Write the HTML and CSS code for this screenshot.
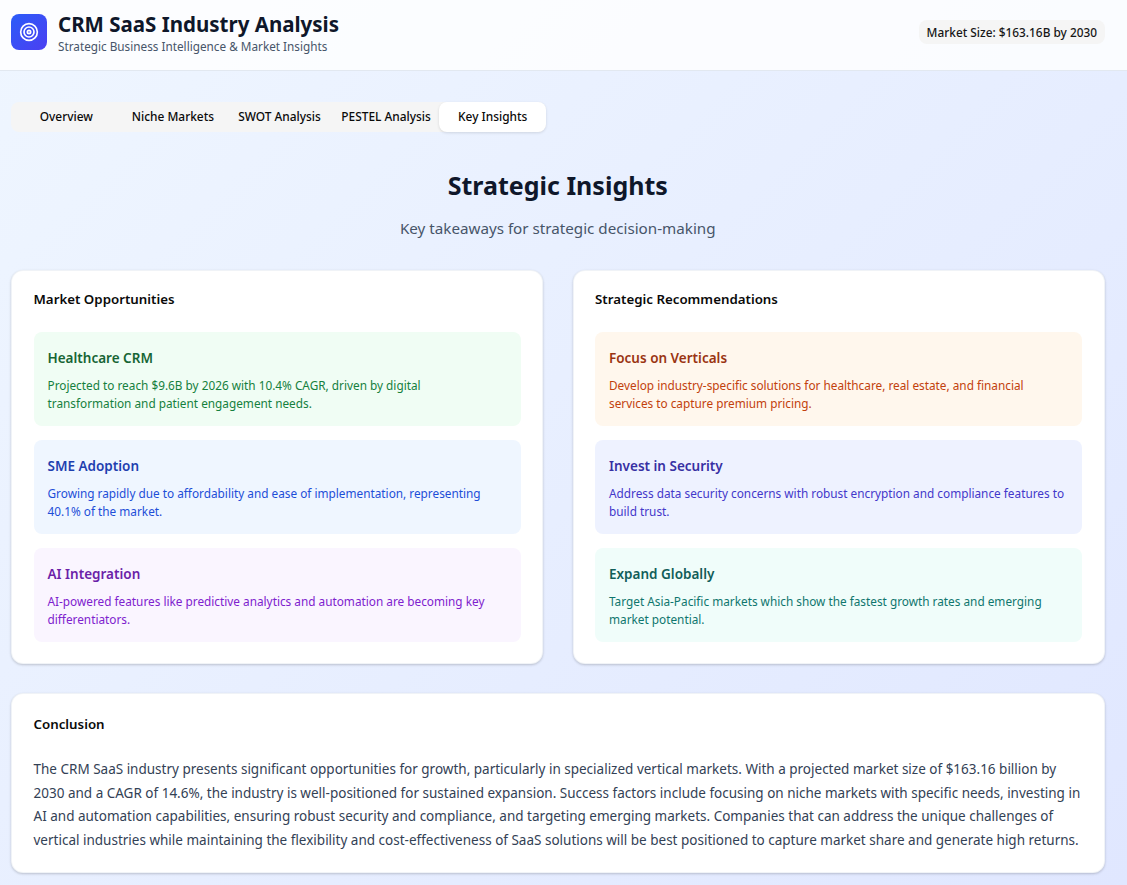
FILE: index.html
```html
<!DOCTYPE html>
<html lang="en">
<head>
<meta charset="utf-8">
<title>CRM SaaS Industry Analysis</title>
<link rel="stylesheet" href="styles.css">
</head>
<body>
<header class="header">
  <div class="brand">
    <div class="logo">
      <svg width="20" height="20" viewBox="0 0 24 24" fill="none" stroke="#fff" stroke-width="2"><circle cx="12" cy="12" r="10"/><circle cx="12" cy="12" r="6"/><circle cx="12" cy="12" r="2"/></svg>
    </div>
    <div>
      <h1 class="title">CRM SaaS Industry Analysis</h1>
      <p class="subtitle">Strategic Business Intelligence &amp; Market Insights</p>
    </div>
  </div>
  <div class="badge">Market Size: $163.16B by 2030</div>
</header>
<main class="main">
  <nav class="tabs">
    <div class="tab">Overview</div>
    <div class="tab">Niche Markets</div>
    <div class="tab">SWOT Analysis</div>
    <div class="tab">PESTEL Analysis</div>
    <div class="tab tab-active">Key Insights</div>
  </nav>
  <section class="intro">
    <h2 class="intro-title">Strategic Insights</h2>
    <p class="intro-text">Key takeaways for strategic decision-making</p>
  </section>
  <section class="columns">
    <div class="card">
      <h3 class="card-title">Market Opportunities</h3>
      <div class="items">
        <div class="item green"><h4>Healthcare CRM</h4><p>Projected to reach $9.6B by 2026 with 10.4% CAGR, driven by digital transformation and patient engagement needs.</p></div>
        <div class="item blue"><h4>SME Adoption</h4><p>Growing rapidly due to affordability and ease of implementation, representing 40.1% of the market.</p></div>
        <div class="item purple"><h4>AI Integration</h4><p>AI-powered features like predictive analytics and automation are becoming key differentiators.</p></div>
      </div>
    </div>
    <div class="card">
      <h3 class="card-title">Strategic Recommendations</h3>
      <div class="items">
        <div class="item orange"><h4>Focus on Verticals</h4><p>Develop industry-specific solutions for healthcare, real estate, and financial services to capture premium pricing.</p></div>
        <div class="item indigo"><h4>Invest in Security</h4><p>Address data security concerns with robust encryption and compliance features to build trust.</p></div>
        <div class="item teal"><h4>Expand Globally</h4><p>Target Asia-Pacific markets which show the fastest growth rates and emerging market potential.</p></div>
      </div>
    </div>
  </section>
  <section class="card conclusion">
    <h3 class="card-title">Conclusion</h3>
    <p class="conclusion-text">The CRM SaaS industry presents significant opportunities for growth, particularly in specialized vertical markets. With a projected market size of $163.16 billion by 2030 and a CAGR of 14.6%, the industry is well-positioned for sustained expansion. Success factors include focusing on niche markets with specific needs, investing in AI and automation capabilities, ensuring robust security and compliance, and targeting emerging markets. Companies that can address the unique challenges of vertical industries while maintaining the flexibility and cost-effectiveness of SaaS solutions will be best positioned to capture market share and generate high returns.</p>
  </section>
</main>
</body>
</html>
```
FILE: styles.css
```css
* { box-sizing: border-box; margin: 0; padding: 0; }
html, body { height: 885px; overflow: hidden; }
body {
  font-family: "Noto Sans", sans-serif;
  background: linear-gradient(135deg, #eff6ff 0%, #e0e7ff 100%);
  color: #0f172a;
}
.header {
  height: 71px;
  padding: 10px 22px 16px 11px;
  display: flex;
  align-items: center;
  justify-content: space-between;
  background: rgba(255, 255, 255, 0.8);
  border-bottom: 1px solid #e2e8f0;
}
.brand { display: flex; align-items: center; gap: 11px; }
.logo {
  width: 36px;
  height: 36px;
  border-radius: 8px;
  background: linear-gradient(135deg, #2b5cf8, #4c3ff2);
  display: flex;
  align-items: center;
  justify-content: center;
}
.title { font-size: 20.5px; line-height: 28px; font-weight: 700; color: #0f172a; }
.subtitle { font-size: 11.75px; line-height: 16px; color: #475569; }
.badge {
  background: #f5f5f5;
  color: #171717;
  border-radius: 8px;
  font-size: 11.85px;
  font-weight: 500;
  line-height: 16px;
  padding: 4px 8px;
}
.main { padding: 31px 22.5px 0 11px; }
.tabs {
  width: 535px;
  height: 30px;
  display: grid;
  grid-template-columns: repeat(5, 1fr);
  background: #f5f5f5;
  border-radius: 8px;
  padding: 0 0 0 2px;
}
.tab {
  display: flex;
  align-items: center;
  justify-content: center;
  padding-bottom: 2px;
  font-size: 11.9px;
  font-weight: 500;
  color: #0a0a0a;
  border-radius: 8px;
  white-space: nowrap;
}
.tab-active { background: #fff; box-shadow: 0 1px 3px rgba(0, 0, 0, 0.12); }
.intro { text-align: center; margin-top: 37px; }
.intro-title { font-size: 25px; line-height: 32px; font-weight: 700; color: #0f172a; }
.intro-text { margin-top: 16px; font-size: 15.2px; line-height: 22px; color: #475569; }
.columns { display: grid; grid-template-columns: 1fr 1fr; gap: 29.5px; margin-top: 31px; }
.card {
  background: #fff;
  border: 1px solid rgba(226, 232, 240, 0.5);
  border-radius: 12px;
  padding: 21px 21.5px;
  box-shadow: 0 1px 3px rgba(0, 0, 0, 0.12), 0 1px 2px rgba(0, 0, 0, 0.08);
}
.card-title { font-size: 13.3px; line-height: 14px; font-weight: 600; color: #0a0a0a; }
.items { display: flex; flex-direction: column; gap: 14px; margin-top: 26px; }
.item { border-radius: 8px; padding: 16px 14px 13px; height: 94px; }
.item h4 { font-size: 13.5px; line-height: 20px; font-weight: 600; }
.item p { font-size: 11.8px; line-height: 18px; margin-top: 8px; }
.green { background: #f0fdf4; }
.green h4 { color: #166534; }
.green p { color: #15803d; }
.blue { background: #eff6ff; }
.blue h4 { color: #1e40af; }
.blue p { color: #1d4ed8; }
.purple { background: #faf5ff; }
.purple h4 { color: #6b21a8; }
.purple p { color: #7e22ce; }
.orange { background: #fff7ed; }
.orange h4 { color: #9a3412; }
.orange p { color: #c2410c; }
.indigo { background: #eef2ff; }
.indigo h4 { color: #3730a3; }
.indigo p { color: #4338ca; }
.teal { background: #f0fdfa; }
.teal h4 { color: #115e59; }
.teal p { color: #0f766e; }
.conclusion { margin-top: 29px; padding-top: 23px; padding-bottom: 20px; }
.conclusion-text { margin-top: 27px; font-size: 13.5px; line-height: 23.6px; color: #334155; }
```
